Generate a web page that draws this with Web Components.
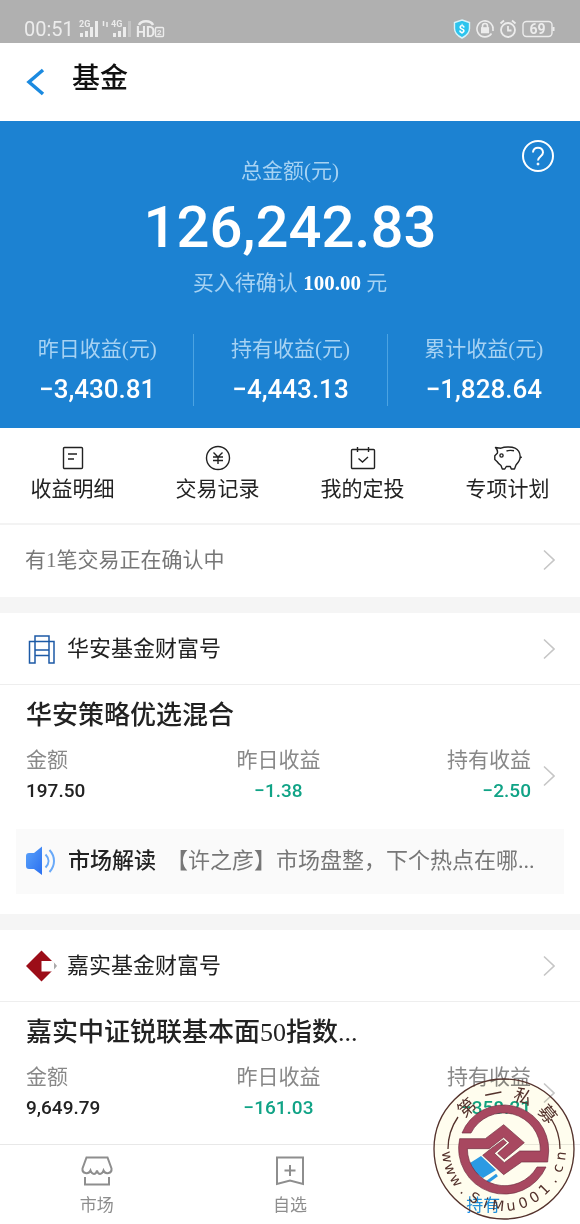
<!DOCTYPE html>
<html lang="zh-CN">
<head>
<meta charset="utf-8">
<meta name="viewport" content="width=device-width, initial-scale=1">
<title>基金</title>
<style>
body{
  margin:0;
  background:#fff;
  color:#222;
  font-family:"Liberation Serif","Noto Sans CJK SC",serif;
  font-size:21px;
  line-height:30px;
  --num:Roboto,"Liberation Sans",sans-serif;
  --blue:#1c82d2;
  --grey:#888;
  --line:#eee;
  --green:#10a386;
}
.page{ position:relative; }
.quick{
  display:grid;
  grid-template-columns:repeat(4,1fr);
  padding:16px 0 19px;
  border-bottom:2px solid #f3f3f3;
}
.tabs{
  display:flex;
  border-top:1px solid #e8e8e8;
  background:#fff;
}
</style>
</head>
<body>
<div class="page">
  <status-bar></status-bar>
  <nav-header>基金</nav-header>
  <fund-hero>
    <span slot="label">总金额(元)</span>
    <span slot="total">126,242.83</span>
    <span slot="pending">买入待确认 <b style="color:#fff">100.00</b> 元</span>
    <hero-stat label="昨日收益(元)">−3,430.81</hero-stat>
    <hero-stat label="持有收益(元)">−4,443.13</hero-stat>
    <hero-stat label="累计收益(元)">−1,828.64</hero-stat>
  </fund-hero>

  <nav class="quick">
    <quick-action>
      <svg slot="icon" width="28" height="28" viewBox="0 0 28 28" fill="none" stroke="#222" stroke-width="1.4"><rect x="4.500" y="3.500" width="19" height="21" rx="1"/><path d="M9 10h9M9 15h6"/></svg>
      收益明细
    </quick-action>
    <quick-action>
      <svg slot="icon" width="28" height="28" viewBox="0 0 28 28" fill="none" stroke="#222" stroke-width="1.4"><circle cx="14" cy="14" r="11.5"/><path d="M9.500 8.500l4.500 4.500 4.500-4.500M9 13h10M9 16.500h10M14 13v7"/></svg>
      交易记录
    </quick-action>
    <quick-action>
      <svg slot="icon" width="28" height="28" viewBox="0 0 28 28" fill="none" stroke="#222" stroke-width="1.4"><rect x="2.500" y="5.500" width="23" height="19" rx="1"/><path d="M8.500 3v5M19.500 3v5M9.500 14.500l4 3.500 5.500-5"/></svg>
      我的定投
    </quick-action>
    <quick-action>
      <svg slot="icon" width="28" height="28" viewBox="0 0 28 28" fill="none" stroke="#222" stroke-width="1.4" stroke-linejoin="round"><path d="M1.500 3.500c2 .8 4 .3 5.500.7C10 3 17 2.300 21 4.200c3.500 1.700 5 4.500 5.200 8.300 0 4-2 6-4.200 8.500l-1.500 4h-3.200l-1-2.500h-4l-1.500 2.500H8.300l-1.300-3.500C5 20 4 19 3 17.500L.8 15.500v-3.700l2.500-2.500C4 7.500 3.200 5.500 1.500 3.500z"/><circle cx="7.500" cy="11.500" r="1.600"/><path d="M12.500 7c2.500-.8 5-.8 7.500-.2M26 13.500c.8.300 1.400-.1 1.700-.8"/></svg>
      专项计划
    </quick-action>
  </nav>

  <notice-row>有1笔交易正在确认中</notice-row>

  <fund-card>
    <svg slot="logo" width="31" height="32" viewBox="0 0 31 32" fill="none" stroke="#1c5aa6" stroke-width="1.500"><path d="M3.500 8.500H28v21.500h-5v-7.500H9v7.500H3.500zM9 8.500v8.500h14V8.500M9 17v5.500M23 17v5.500M9 8.500v-5.500h14v5.500H9"/></svg>
    <span slot="company">华安基金财富号</span>
    <span slot="name">华安策略优选混合</span>
    <span slot="amount">197.50</span>
    <span slot="day">−1.38</span>
    <span slot="hold">−2.50</span>
    <market-note slot="note" heading="市场解读">【许之彦】市场盘整，下个热点在哪...</market-note>
  </fund-card>

  <fund-card>
    <svg slot="logo" width="31" height="32" viewBox="0 0 31 32"><path d="M15.500 .5L31 16 15.500 31.500 0 16z" fill="#9c0d18"/><path d="M15.500 11h11l5 5-5 5.500h-11z" fill="#fff"/><path d="M28 12.500L31 16l-3 3.500z" fill="#aaa"/></svg>
    <span slot="company">嘉实基金财富号</span>
    <span slot="name">嘉实中证锐联基本面50指数...</span>
    <span slot="amount">9,649.79</span>
    <span slot="day">−161.03</span>
    <span slot="hold">−358.21</span>
  </fund-card>

  <nav class="tabs">
    <tab-item>
      <svg slot="icon" width="34" height="34" viewBox="0 0 34 34" fill="none" stroke="#8e8e8e" stroke-width="2"><path d="M6.500 3.500h21l4 11c.6 5-6 6.500-8 2-1.500 4.500-5.500 4.500-6.500 0-1 4.500-5 4.500-6.500 0-2 4.500-8.600 3-8-2zM5 23v7.500h24V23"/></svg>
      市场
    </tab-item>
    <tab-item>
      <svg slot="icon" width="34" height="34" viewBox="0 0 34 34" fill="none" stroke="#8e8e8e" stroke-width="2"><path d="M4 3.500h26v26.500l-13-3.500-13 3.500zM17 11v11M11.500 16.500h11"/></svg>
      自选
    </tab-item>
    <tab-item active>
      <svg slot="icon" width="34" height="34" viewBox="0 0 34 34"><path d="M4 9L15 2l15 14-13 8L8 18z" fill="#2b9bf4"/><path d="M20 29l11-8" stroke="#2b9bf4" stroke-width="3"/></svg>
      持有
    </tab-item>
  </nav>

  <seal-mark></seal-mark>
</div>

<script>
// registers an element whose shadow root is cloned from the given markup
function define(name, html, setup) {
  const template = document.createElement('template');
  template.innerHTML = html;
  customElements.define(name, class extends HTMLElement {
    constructor() {
      super();
      this.attachShadow({mode: 'open'});
      this.shadowRoot.append(template.content.cloneNode(true));
    }
    connectedCallback() {
      if (setup) setup(this, this.shadowRoot);
    }
  });
}

const chevron = `<svg class="chevron" width="12" height="22" viewBox="0 0 12 22" fill="none" stroke="#c6c6c6" stroke-width="1.600"><path d="M1 1.500l10 9.500-10 9.500"/></svg>`;

define('status-bar', `
<style>
:host{
  display:flex;
  align-items:center;
  justify-content:space-between;
  padding:17px 25px 2px 24px;
  background:#b0b0b0;
  color:#ececec;
  font-family:var(--num);
  line-height:24px;
}
div{ display:flex; align-items:center; gap:5px; }
span{ font-size:20px; }
</style>
<div>
  <span>00:51</span>
  <svg width="86" height="20" viewBox="0 0 86 20" fill="#ececec" font-family="Roboto" font-weight="bold">
    <text x="0" y="8" font-size="9">2G</text><path d="M1 14h3v4H1zM6 12h3v6H6zM11 8h3v10h-3zM16 2h3v16h-3z"/>
    <path d="M24.500 2v5M28 3v5" stroke="#ececec" stroke-width="1.500"/>
    <text x="32" y="8" font-size="9">4G</text><path d="M34 14h3v4h-3zM39 12h3v6h-3zM44 8h3v10h-3z"/><path opacity=".35" d="M49 2h3v16h-3z"/>
    <path d="M60 6c2-5 12-5 14 0" fill="none" stroke="#ececec" stroke-width="2.500"/>
    <text x="57" y="18" font-size="14">HD</text>
    <rect x="76.500" y="8.500" width="8" height="9" rx="1" fill="none" stroke="#ececec" stroke-width="1.400"/><text x="78" y="16" font-size="8">2</text>
  </svg>
</div>
<div>
  <svg width="18" height="20" viewBox="0 0 18 20"><path d="M9 1l7.500 2.500v6c0 4.500-3.500 7.500-7.500 9.500-4-2-7.500-5-7.500-9.500v-6z" fill="#2cc4ee" stroke="#d8f4fb" stroke-width="1.400"/><text x="9" y="14" text-anchor="middle" font-family="Roboto" font-size="11" font-weight="bold" fill="#fff">$</text></svg>
  <svg width="18" height="20" viewBox="0 0 18 20" fill="none" stroke="#ececec" stroke-width="1.600"><path d="M15.500 14.500a8 8 0 1 1 1.300-3M17 8v4"/><path d="M6.500 9V7a2.500 2.500 0 0 1 5 0v2"/><rect x="5.800" y="9" width="6.500" height="4.500" fill="#ececec"/></svg>
  <svg width="18" height="20" viewBox="0 0 18 20" fill="none" stroke="#ececec" stroke-width="1.800"><circle cx="9" cy="11" r="7"/><path d="M9 7v4.500h3.500M1.500 4.500l3.500-3M16.500 4.500l-3.500-3"/></svg>
  <svg width="33" height="20" viewBox="0 0 33 20"><rect x="1" y="2.500" width="29" height="15" rx="3.500" fill="none" stroke="#ececec" stroke-width="1.400"/><path d="M31.500 8v4" stroke="#ececec" stroke-width="2"/><text x="15.500" y="15" text-anchor="middle" font-family="Roboto" font-size="14" font-weight="bold" fill="#ececec">69</text></svg>
</div>
`);

define('nav-header', `
<style>
:host{
  display:flex;
  align-items:center;
  gap:26px;
  padding:16px 26px 22px;
}
button{
  display:flex;
  border:0;
  padding:6px 0 0;
  background:none;
}
h1{
  margin:0;
  font-size:28px;
  line-height:40px;
  font-weight:500;
  color:#111;
}
</style>
<button aria-label="返回"><svg width="20" height="28" viewBox="0 0 20 28" fill="none" stroke="#1b8ae0" stroke-width="3.500"><path d="M17 2L3 14l14 12"/></svg></button>
<h1><slot></slot></h1>
`);

define('fund-hero', `
<style>
:host{
  display:block;
  position:relative;
  padding:35px 0 22px;
  background:var(--blue);
  color:#a6d2f3;
  text-align:center;
}
.total{
  color:#fff;
  font:500 58px/60px var(--num);
  padding:11px 0;
}
.stats{ display:flex; margin-top:36px; }
button{
  position:absolute;
  top:18px;
  right:25px;
  display:flex;
  border:0;
  padding:0;
  background:none;
}
</style>
<slot name="label"></slot>
<div class="total"><slot name="total"></slot></div>
<slot name="pending"></slot>
<div class="stats"><slot></slot></div>
<button aria-label="帮助"><svg width="34" height="34" viewBox="0 0 34 34" fill="none" stroke="#fff" stroke-width="2"><circle cx="17" cy="17" r="15"/><path d="M12 13.500c0-6.500 10-6.500 10 0 0 4-5 4-5 8"/><circle cx="17" cy="25" r="1" fill="#fff" stroke-width="1"/></svg></button>
`);

define('hero-stat', `
<style>
:host{
  display:flex;
  flex-direction:column;
  flex:1;
  gap:8px;
  border-left:1px solid #4ba3e2;
}
:host(:first-of-type){ border-left-color:transparent; }
b{ color:#fff; font:500 26px/34px var(--num); }
</style>
<span></span>
<b><slot></slot></b>
`, (el, root) => {
  root.querySelector('span').textContent = el.getAttribute('label');
});

define('quick-action', `
<style>
:host{ display:block; }
a{
  display:flex;
  flex-direction:column;
  align-items:center;
  gap:2px;
  color:#222;
  text-decoration:none;
}
</style>
<a href="#"><slot name="icon"></slot><span><slot></slot></span></a>
`);

define('notice-row', `
<style>
:host{ display:block; border-bottom:16px solid #f5f5f5; }
a{
  display:flex;
  align-items:center;
  justify-content:space-between;
  padding:20px 25px 22px;
  color:#777;
  text-decoration:none;
}
</style>
<a href="#"><span><slot></slot></span>${chevron}</a>
`);

define('fund-card', `
<style>
:host{ display:block; }
:host(:first-of-type){ border-bottom:16px solid #f5f5f5; padding-bottom:20px; }
.head{
  display:flex;
  align-items:center;
  gap:10px;
  padding:20px 25px 19px 26px;
  border-bottom:1px solid var(--line);
  color:#222;
  font-size:22px;
  line-height:32px;
  text-decoration:none;
}
.head .chevron{ margin-left:auto; }
.body{ padding:13px 25px 20px 26px; }
h2{
  margin:0;
  font-size:26px;
  line-height:36px;
  font-weight:500;
}
.row{
  display:flex;
  align-items:center;
  gap:12px;
  padding-top:11px;
}
dl{
  flex:1;
  display:flex;
  justify-content:space-between;
  margin:0;
}
dl div:nth-child(2){ text-align:center; }
dl div:nth-child(3){ text-align:right; }
/* keeps the middle column in the centre whatever the amounts are */
dl div{ flex:1; }
dt{ color:var(--grey); }
dd{
  margin:0;
  font:500 19px/32px var(--num);
}
.down{ color:var(--green); }
</style>
<a class="head" href="#"><slot name="logo"></slot><slot name="company"></slot>${chevron}</a>
<div class="body">
  <h2><slot name="name"></slot></h2>
  <div class="row">
    <dl>
      <div><dt>金额</dt><dd><slot name="amount"></slot></dd></div>
      <div><dt>昨日收益</dt><dd class="down"><slot name="day"></slot></dd></div>
      <div><dt>持有收益</dt><dd class="down"><slot name="hold"></slot></dd></div>
    </dl>
    ${chevron}
  </div>
</div>
<slot name="note"></slot>
`);

define('market-note', `
<style>
:host{ display:block; margin:2px 16px 0; background:#fafafa; }
a{
  display:flex;
  align-items:center;
  padding:16px 10px 17px;
  font-size:22px;
  line-height:32px;
  color:#777;
  text-decoration:none;
  white-space:nowrap;
}
svg{ flex:none; margin-right:12px; }
b{ color:#222; font-weight:500; margin-right:10px; }
span{ overflow:hidden; text-overflow:ellipsis; }
</style>
<a href="#">
  <svg width="30" height="30" viewBox="0 0 30 30"><defs><linearGradient id="g" x2="1" y2="1"><stop stop-color="#5ba3fa"/><stop offset="1" stop-color="#2a6ff0"/></linearGradient></defs><path d="M3 7h5l8-6.500V29L8 23H3c-2 0-3-1-3-3V10c0-2 1-3 3-3z" fill="url(#g)"/><path d="M19.500 8.500c4 4 4 9 0 13M23.500 4c6 6.500 6 15.500 0 22" fill="none" stroke="#69a9f8" stroke-width="2"/></svg>
  <b></b><span><slot></slot></span>
</a>
`, (el, root) => {
  root.querySelector('b').textContent = el.getAttribute('heading');
});

define('tab-item', `
<style>
:host{ display:block; flex:1; }
a{
  display:flex;
  flex-direction:column;
  align-items:center;
  gap:6px;
  padding:9px 0 6px;
  color:#8e8e8e;
  font-size:17px;
  line-height:24px;
  text-decoration:none;
}
:host([active]) a{ color:#1b8fea; }
</style>
<a href="#"><slot name="icon"></slot><span><slot></slot></span></a>
`);

// round stamp that floats over the bottom right corner
define('seal-mark', `
<style>
:host{
  position:absolute;
  right:4px;
  bottom:3px;
  width:144px;
  height:144px;
  pointer-events:none;
}
.disc{
  position:absolute;
  inset:2px;
  border-radius:50%;
  background:#fffdee;
  mix-blend-mode:multiply;
}
svg{ position:absolute; inset:0; }
</style>
<div class="disc"></div>
<svg width="144" height="144" viewBox="20 50 432 432">
  <g fill="none" stroke="#54322c" stroke-width="4">
    <circle cx="236" cy="266" r="210"/>
    <path d="M68 266A168 168 0 0 1 98 170M404 266A168 168 0 0 0 378 176"/>
  </g>
  <path d="M235 193L297 247 283 305 235 343 172 285 180 250z" fill="#fffdee"/>
  <g fill="#a84860" stroke="#6d2c40" stroke-width="2">
    <path d="M110 218A135 135 0 0 1 370 272L367 305H289L235 343 172 285 193 268 234 238 244 247 207 279 237 307 283 272H345A110 110 0 0 0 137 218z"/>
    <path d="M103 235H180L235 193 297 247 237 297 217 279 253 247 235 231 191 265H126A112 112 0 0 0 335 320H362A137 137 0 0 1 103 235z"/>
  </g>
  <g class="ring" fill="#54322c" text-anchor="middle"></g>
</svg>
`, (el, root) => {
  const ring = root.querySelector('.ring');
  function put(ch, angle, y, size, family) {
    const t = document.createElementNS('http://www.w3.org/2000/svg', 'text');
    t.textContent = ch;
    t.setAttribute('x', 236);
    t.setAttribute('y', y);
    t.setAttribute('font-size', size);
    t.setAttribute('font-family', family);
    t.setAttribute('transform', `rotate(${angle} 236 266)`);
    ring.append(t);
  }
  [...'第一私募'].forEach((ch, i) => put(ch, -42 + i * 31, 118, 54, 'Noto Sans CJK SC'));
  [...'www.SiMu001.cn'].forEach((ch, i) => put(ch, 82 - i * 12.7, 452, 43, 'DejaVu Sans'));
});
</script>
</body>
</html>
